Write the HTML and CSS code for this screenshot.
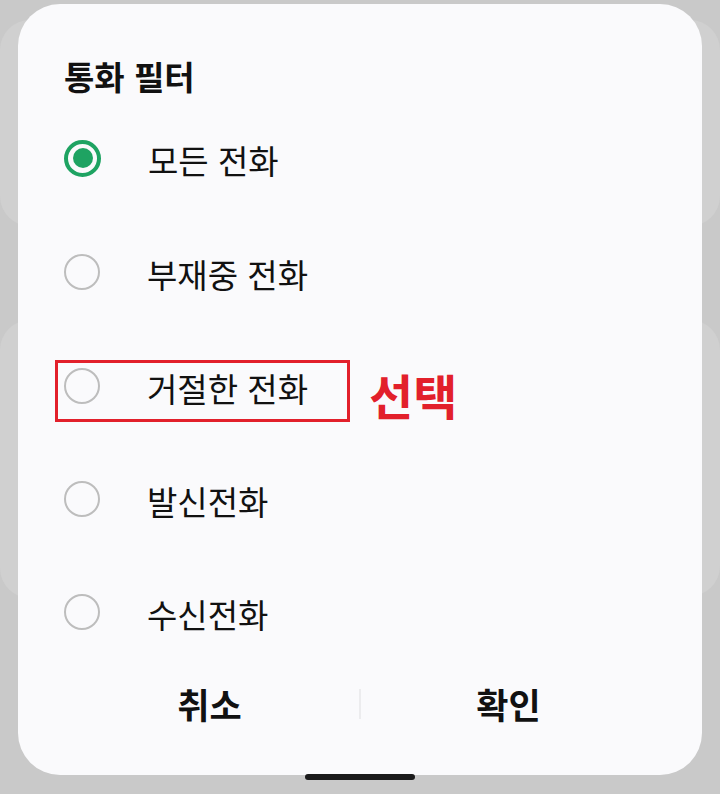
FILE: index.html
```html
<!DOCTYPE html>
<html lang="ko">
<head>
<meta charset="utf-8">
<title>통화 필터</title>
<link rel="stylesheet" href="styles.css">
</head>
<body>
<div class="ghosts" aria-hidden="true">
  <div class="ghost ghost-l1"></div>
  <div class="ghost ghost-l2"></div>
  <div class="ghost ghost-r1"></div>
  <div class="ghost ghost-r2"></div>
</div>
<div class="dialog">
  <h1 class="title">통화 필터</h1>
  <ul class="options">
    <li class="option"><span class="radio checked"></span><span class="label">모든 전화</span></li>
    <li class="option"><span class="radio"></span><span class="label">부재중 전화</span></li>
    <li class="option marked"><span class="radio"></span><span class="label">거절한 전화</span><span class="mark-box"></span><span class="mark-text">선택</span></li>
    <li class="option"><span class="radio"></span><span class="label">발신전화</span></li>
    <li class="option"><span class="radio"></span><span class="label">수신전화</span></li>
  </ul>
  <div class="actions">
    <button class="btn">취소</button>
    <span class="divider"></span>
    <button class="btn">확인</button>
  </div>
</div>
<div class="home-bar"></div>
</body>
</html>
```
FILE: styles.css
```css
html, body {
  margin: 0;
  padding: 0;
}
body {
  width: 720px;
  height: 794px;
  background: #c9c9c9;
  font-family: "Noto Sans CJK KR", "Noto Sans", sans-serif;
  position: relative;
  overflow: hidden;
  padding: 4px 18px 0;
  box-sizing: border-box;
}
.ghosts {
  position: absolute;
  inset: 0;
  overflow: hidden;
}
.ghost {
  position: absolute;
  background: #d0d0d0;
  border-radius: 30px;
  width: 60px;
}
.ghost-l1 { left: 0; top: 20px; height: 206px; }
.ghost-l2 { left: 0; top: 320px; height: 278px; }
.ghost-r1 { right: 0; top: 20px; height: 206px; }
.ghost-r2 { right: 0; top: 320px; height: 276px; }

.dialog {
  position: relative;
  height: 771px;
  background: #fafafc;
  border-radius: 42px;
  box-sizing: border-box;
  padding: 52px 0 0 46px;
  display: flex;
  flex-direction: column;
}
.title {
  margin: 0;
  font-size: 33px;
  font-weight: 700;
  line-height: 40px;
  color: #111;
}
.options {
  list-style: none;
  margin: 5px 0 0;
  padding: 0;
}
.option {
  position: relative;
  height: 114px;
  display: flex;
  align-items: center;
}
.option:nth-child(4) { height: 112px; }
.radio {
  width: 36px;
  height: 36px;
  box-sizing: border-box;
  border: 2.5px solid #bdbdbd;
  border-radius: 50%;
  flex: none;
  display: flex;
  align-items: center;
  justify-content: center;
}
.radio.checked {
  width: 37px;
  height: 37px;
  border: 4px solid #1ea362;
}
.radio.checked::after {
  content: "";
  width: 20px;
  height: 20px;
  border-radius: 50%;
  background: #1ea362;
}
.label {
  margin-left: 47px;
  font-size: 33px;
  color: #111;
  line-height: 40px;
  padding-top: 3px;
}
.mark-box {
  position: absolute;
  left: -9px;
  top: 31px;
  width: 295px;
  height: 62px;
  box-sizing: border-box;
  border: 3px solid #e2202b;
}
.mark-text {
  position: absolute;
  left: 305px;
  top: 33px;
  font-size: 48px;
  font-weight: 700;
  color: #e2202b;
  line-height: 64px;
}
.actions {
  margin-left: -46px;
  padding: 0 46px 0 42px;
  height: 69px;
  display: grid;
  grid-template-columns: 299px 2px 1fr;
  align-items: center;
}
.btn {
  border: 0;
  background: none;
  font-family: inherit;
  font-size: 35px;
  font-weight: 700;
  color: #111;
  padding: 0;
  line-height: 44px;
}
.divider {
  width: 2px;
  height: 30px;
  background: #ececee;
}
.home-bar {
  position: absolute;
  left: 305px;
  top: 774px;
  width: 110px;
  height: 6px;
  border-radius: 3px;
  background: #1b1b1b;
}
```
